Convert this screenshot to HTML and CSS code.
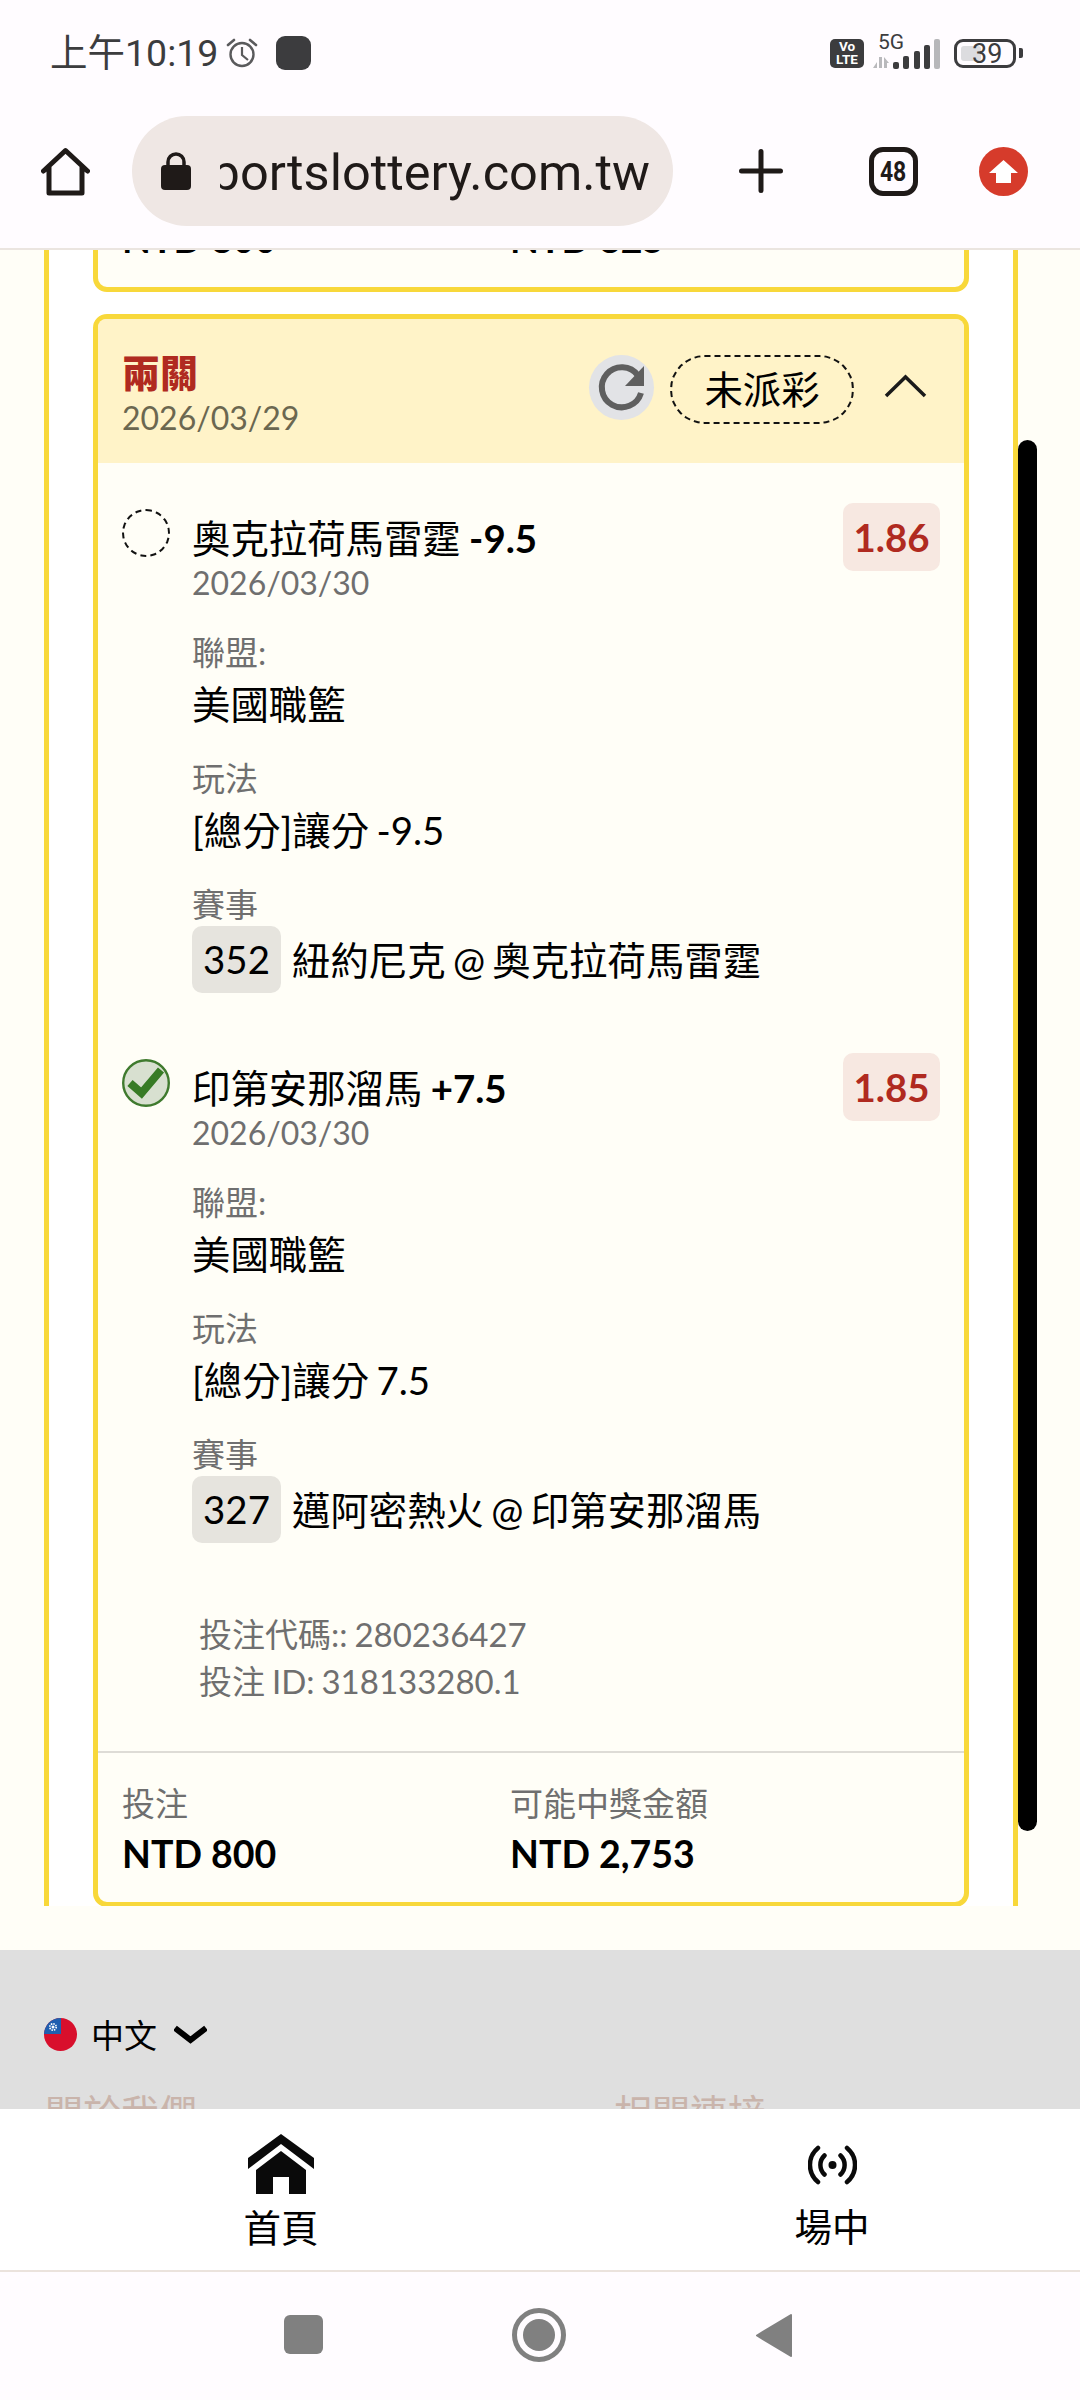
FILE: index.html
```html
<!DOCTYPE html>
<html lang="zh-Hant">
<head>
<meta charset="utf-8">
<title>sportslottery.com.tw</title>
<link rel="stylesheet" href="styles.css">
</head>
<body>
<div class="screen">
  <header class="chrome">
    <div class="status">
      <div class="status-left">
        <span class="time">上午10:19</span>
        <svg class="ic-alarm" viewBox="0 0 32 30"><circle cx="16" cy="16.500" r="11.500" fill="none" stroke="#5a5a5c" stroke-width="2.400"/><path d="M16 9v8l6 5" fill="none" stroke="#5a5a5c" stroke-width="2.200"/><path d="M2 7l6-5M30 7l-6-5" fill="none" stroke="#5a5a5c" stroke-width="2.600" stroke-linecap="round"/></svg>
        <span class="notif"></span>
      </div>
      <div class="status-right">
        <span class="volte"><span>Vo</span><span>LTE</span></span>
        <span class="net">
          <span class="fiveg">5G</span>
          <svg class="ic-signal" viewBox="0 0 67 32"><path d="M0 31l4-6v6zM6 20h3v11H6zM11 20l5 6h-2v5h-3z" fill="#b9b9bc"/><rect x="20" y="25" width="6" height="7" rx="2" fill="#3c3c3e"/><rect x="30" y="19" width="6" height="13" rx="2" fill="#3c3c3e"/><rect x="41" y="14" width="6" height="18" rx="2" fill="#3c3c3e"/><rect x="51" y="8" width="6" height="24" rx="2" fill="#3c3c3e"/><rect x="61" y="2" width="6" height="30" rx="2" fill="#b7b7ba"/></svg>
        </span>
        <span class="battery"><span class="battery-fill"></span><span class="battery-num">39</span></span>
        <span class="battery-nub"></span>
      </div>
    </div>
    <div class="toolbar">
      <svg class="ic-home" viewBox="0 0 49 49"><path d="M2.500 24L24.500 3.500 46.500 24M8 20v26h33V20" fill="none" stroke="#1f1a18" stroke-width="5" stroke-linejoin="round" stroke-linecap="round"/></svg>
      <div class="omnibox">
        <svg class="ic-lock" viewBox="0 0 30 38"><path d="M7 15V10a8 8 0 0 1 16 0v5" fill="none" stroke="#1f1a18" stroke-width="3.500"/><rect x="0" y="13" width="30" height="25" rx="4" fill="#1f1a18"/></svg>
        <div class="url"><span>sportslottery.com.tw</span></div>
      </div>
      <svg class="ic-plus" viewBox="0 0 44 44"><path d="M2.500 22h39M22 2.500v39" fill="none" stroke="#1f1a18" stroke-width="5" stroke-linecap="round"/></svg>
      <div class="tabs"><span>48</span></div>
      <svg class="ic-update" viewBox="0 0 49 49"><circle cx="24.500" cy="24.500" r="24.500" fill="#d63b2b"/><path d="M24.500 13L39 26h-7v10H17V26h-7z" fill="#fff"/></svg>
    </div>
  </header>

  <main class="content">
    <div class="panel">
      <section class="card card-prev">
        <div class="totals">
          <div class="total"><div class="total-label">投注</div><div class="total-value">NTD 800</div></div>
          <div class="total"><div class="total-label">可能中獎金額</div><div class="total-value">NTD 825</div></div>
        </div>
      </section>

      <section class="card">
        <div class="card-head">
          <div class="head-title">
            <div class="parlay">兩關</div>
            <div class="parlay-date">2026/03/29</div>
          </div>
          <div class="head-actions">
            <span class="refresh"><svg viewBox="0 0 65 65"><path d="M49 20.500A20 20 0 1 0 52 38" fill="none" stroke="#5f5f5f" stroke-width="6"/><path d="M55 11v20H36z" fill="#5f5f5f"/></svg></span>
            <span class="pill">未派彩</span>
            <svg class="ic-up" viewBox="0 0 43 24"><path d="M2 22L21.500 3 41 22" fill="none" stroke="#1a1a1a" stroke-width="3.500"/></svg>
          </div>
        </div>

        <div class="leg">
          <div class="leg-head">
            <span class="mark mark-pending"></span>
            <div class="leg-title">
              <div class="pick">奧克拉荷馬雷霆 <b>-9.5</b></div>
              <div class="leg-date">2026/03/30</div>
            </div>
            <span class="odds">1.86</span>
          </div>
          <div class="leg-details">
            <div class="field"><div class="field-label">聯盟:</div><div class="field-value">美國職籃</div></div>
            <div class="field"><div class="field-label">玩法</div><div class="field-value">[總分]讓分 -9.5</div></div>
            <div class="field"><div class="field-label">賽事</div>
              <div class="match"><span class="match-no">352</span><span>紐約尼克 @ 奧克拉荷馬雷霆</span></div>
            </div>
          </div>
        </div>

        <div class="leg">
          <div class="leg-head">
            <svg class="mark" viewBox="0 0 48 48"><circle cx="24" cy="24" r="22.800" fill="#d8e0d0" stroke="#3f7a2e" stroke-width="2.400"/><path d="M8 24l11.500 10L39 11" fill="none" stroke="#377b25" stroke-width="8"/></svg>
            <div class="leg-title">
              <div class="pick">印第安那溜馬 <b>+7.5</b></div>
              <div class="leg-date">2026/03/30</div>
            </div>
            <span class="odds">1.85</span>
          </div>
          <div class="leg-details">
            <div class="field"><div class="field-label">聯盟:</div><div class="field-value">美國職籃</div></div>
            <div class="field"><div class="field-label">玩法</div><div class="field-value">[總分]讓分 7.5</div></div>
            <div class="field"><div class="field-label">賽事</div>
              <div class="match"><span class="match-no">327</span><span>邁阿密熱火 @ 印第安那溜馬</span></div>
            </div>
          </div>
        </div>

        <div class="bet-ids">
          <div>投注代碼:: 280236427</div>
          <div>投注 ID: 318133280.1</div>
        </div>

        <div class="totals">
          <div class="total"><div class="total-label">投注</div><div class="total-value">NTD 800</div></div>
          <div class="total"><div class="total-label">可能中獎金額</div><div class="total-value">NTD 2,753</div></div>
        </div>
      </section>
    </div>
    <div class="scrollbar"></div>
  </main>

  <footer class="site-footer">
    <div class="lang">
      <svg class="ic-flag" viewBox="0 0 33 33"><defs><clipPath id="flagclip"><circle cx="16.500" cy="16.500" r="16.500"/></clipPath></defs><g clip-path="url(#flagclip)"><rect width="33" height="33" fill="#d80f2c"/><rect width="17" height="16" fill="#1f5fb0"/><circle cx="9" cy="9" r="3.200" fill="none" stroke="#fff" stroke-width="1.600" stroke-dasharray="1.500 1"/><circle cx="9" cy="9" r="1.500" fill="#fff"/></g></svg>
      <span class="lang-name">中文</span>
      <svg class="ic-down" viewBox="0 0 33 19"><path d="M1 3l15.500 12L32 3" fill="none" stroke="#000" stroke-width="6"/></svg>
    </div>
    <div class="footer-links">
      <span>關於我們</span>
      <span>相關連接</span>
    </div>
  </footer>

  <nav class="tabbar">
    <a class="tab tab-home">
      <svg class="ic-solid-home" viewBox="0 0 66 60"><path d="M33 0L66 24V35L33 10 0 35V24zM33 17L58 36V60H41V43H25V60H8V36z" fill="#0a0a0a"/></svg>
      <span>首頁</span>
    </a>
    <a class="tab tab-live">
      <svg class="ic-live" viewBox="0 0 49 40"><circle cx="24.500" cy="20" r="4" fill="#0a0a0a"/><path d="M10 3A22 22 0 0 0 10 37M39 3A22 22 0 0 1 39 37M16.500 10.500A13 13 0 0 0 16.500 29.500M32.500 10.500A13 13 0 0 1 32.500 29.500" fill="none" stroke="#0a0a0a" stroke-width="4.500" stroke-linecap="round"/></svg>
      <span>場中</span>
    </a>
  </nav>

  <div class="sysnav">
    <span class="sys-square"></span>
    <span class="sys-circle"><span></span></span>
    <svg class="sys-back" viewBox="0 0 37 45"><path d="M36 2L2 22.500 36 43z" fill="#808080" stroke="#808080" stroke-width="2" stroke-linejoin="round"/></svg>
  </div>
</div>
</body>
</html>
```
FILE: styles.css
```css
* { box-sizing: border-box; }
html, body { margin: 0; padding: 0; }
body {
  width: 1080px;
  height: 2400px;
  overflow: hidden;
  font-family: "Lato", "Noto Sans CJK TC", sans-serif;
  color: #000;
  background: #fffcff;
}
svg { display: block; flex: none; }
.screen { width: 1080px; height: 2400px; display: flex; flex-direction: column; overflow: hidden; }

/* browser chrome */
.chrome { height: 250px; background: #fffcff; border-bottom: 2px solid #ebe5e0; flex: none; position: relative; z-index: 2; }
.status { height: 106px; display: flex; justify-content: space-between; align-items: center; padding: 0 57px 0 50px; }
.status-left, .status-right { display: flex; align-items: center; }
.time { font-family: "Roboto", "Noto Sans CJK TC", sans-serif; font-size: 37.500px; color: #3c3c3e; line-height: 50px; }
.ic-alarm { width: 32px; height: 30px; margin-left: 8px; }
.notif { width: 35px; height: 34px; border-radius: 9px; background: #3c3c3e; margin-left: 18px; }
.volte { width: 34px; height: 29px; border-radius: 5px; background: #3c3c3e; color: #fff; display: flex; flex-direction: column; align-items: center; justify-content: center; font-family: "Roboto", sans-serif; font-weight: 700; font-size: 13.500px; line-height: 13px; }
.net { width: 67px; height: 32px; margin-left: 9px; position: relative; }
.fiveg { position: absolute; left: 5px; top: -6px; font-family: "Roboto", sans-serif; font-size: 21px; line-height: 22px; color: #3c3c3e; }
.ic-signal { width: 67px; height: 32px; }
.battery { width: 62px; height: 29px; margin-left: 14px; border: 3px solid #3c3c3e; border-radius: 9px; position: relative; display: block; }
.battery-fill { position: absolute; left: 4px; top: 4px; bottom: 4px; width: 20px; background: #dcdcdf; border-radius: 3px; }
.battery-num { position: absolute; left: 15px; top: 1px; font-family: "Roboto", sans-serif; font-size: 27px; line-height: 23px; color: #3c3c3e; }
.battery-nub { width: 4px; height: 10px; margin-left: 3px; background: #3c3c3e; border-radius: 0 2px 2px 0; }

.toolbar { height: 142px; padding: 0 0 12px 41px; display: flex; align-items: center; }
.ic-home { width: 49px; height: 49px; }
.omnibox { width: 541px; height: 110px; margin-left: 42px; border-radius: 55px; background: #efe7e4; display: flex; align-items: center; padding-left: 29px; }
.ic-lock { width: 30px; height: 38px; }
.url { width: 430px; margin-left: 29px; padding-top: 3px; overflow: hidden; display: flex; justify-content: flex-end; font-family: "Roboto", sans-serif; font-size: 50.500px; line-height: 64px; color: #1f1a18; white-space: nowrap; }
.url span { flex: none; }
.ic-plus { width: 44px; height: 44px; margin-left: 66px; }
.tabs { width: 49px; height: 49px; margin-left: 86px; border: 5px solid #1f1a18; border-radius: 14px; display: flex; align-items: center; justify-content: center; font-family: "Roboto", sans-serif; font-weight: 700; font-size: 28px; color: #1f1a18; }
.tabs span { display: block; transform: scaleX(0.82); }
.ic-update { width: 49px; height: 49px; margin-left: 61px; }

/* content */
.content { height: 1700px; flex: none; background: #fffef7; padding-left: 44px; position: relative; overflow: hidden; }
.panel { width: 974px; height: 1656px; background: #fff; border-left: 5px solid #f8d83a; border-right: 5px solid #f8d83a; padding: 0 44px; overflow: hidden; }
.card { width: 876px; border: 5px solid #f8d83a; border-radius: 14px; background: #fffef7; margin-top: 22px; }
.card-prev { margin-top: -119px; }
.scrollbar { position: absolute; left: 1018px; top: 190px; width: 19px; height: 1391px; border-radius: 10px; background: #000; }

.card-head { height: 144px; background: #fff3c8; border-radius: 8px 8px 0 0; display: flex; justify-content: space-between; padding: 30px 37px 0 24px; }
.parlay { font-size: 38px; font-weight: 900; line-height: 46px; color: #b02a20; }
.parlay-date { font-size: 32px; line-height: 46px; color: #6b6750; }
.head-actions { display: flex; align-items: flex-start; margin-top: 6px; }
.refresh { width: 65px; height: 65px; border-radius: 50%; background: #e2e3e6; display: block; }
.refresh svg { width: 65px; height: 65px; }
.pill { width: 184px; height: 69px; margin-left: 16px; border: 2px dashed #111; border-radius: 35px; font-size: 38.400px; line-height: 65px; text-align: center; }
.ic-up { width: 43px; height: 24px; margin: 19px 0 0 30px; }

.leg { padding: 40px 24px 0 24px; }
.leg + .leg { padding-top: 60px; }
.leg-head { display: flex; align-items: flex-start; }
.mark { width: 48px; height: 48px; margin-top: 6px; flex: none; }
.mark-pending { border: 2px dashed #111; border-radius: 50%; display: block; }
.leg-title { margin: 12px 0 0 22px; flex: 1; }
.pick { font-size: 38.400px; line-height: 46px; word-spacing: -1.500px; }
.pick b { font-weight: 700; }
.leg-date { font-size: 32px; line-height: 44px; color: #6f6f6f; }
.odds { width: 97px; height: 68px; border-radius: 10px; background: #f7e8e1; color: #b02a20; font-size: 38.400px; font-weight: 700; line-height: 68px; text-align: center; }
.leg-details { margin: 1px 0 0 70px; }
.field { margin-top: 22px; }
.field-label { font-size: 33px; line-height: 50px; color: #6f6f6f; }
.field-value { font-size: 38.400px; line-height: 54px; word-spacing: -2.500px; }
.match { display: flex; align-items: center; font-size: 38.400px; line-height: 54px; margin-top: -3px; word-spacing: -2.500px; }
.match-no { width: 89px; height: 67px; line-height: 67px; border-radius: 10px; background: #e6e4de; text-align: center; margin-right: 11px; }

.bet-ids { margin: 68px 0 46px 101px; font-size: 33px; line-height: 47px; color: #6f6f6f; word-spacing: -1.500px; }

.totals { border-top: 2px solid #dedcd6; padding: 25px 0 23px 24px; display: flex; }
.total { width: 388px; }
.total-label { font-size: 33px; line-height: 50px; color: #6f6f6f; }
.total-value { font-size: 37.500px; line-height: 51px; font-weight: 700; }

/* site footer */
.site-footer { height: 159px; flex: none; background: #dfdfdf; padding: 68px 0 0 44px; overflow: hidden; }
.lang { display: flex; align-items: center; height: 33px; }
.ic-flag { width: 33px; height: 33px; }
.lang-name { font-size: 33px; line-height: 40px; margin-left: 14px; }
.ic-down { width: 33px; height: 19px; margin-left: 17px; }
.footer-links { display: flex; margin-top: 36px; font-size: 38px; line-height: 50px; color: #c9b4ab; }
.footer-links span { flex: none; width: 569px; padding-left: 1px; }

/* bottom tabs */
.tabbar { height: 163px; flex: none; background: #fff; border-bottom: 2px solid #ebe3dd; display: flex; align-items: flex-start; position: relative; z-index: 1; }
.tab { display: flex; flex-direction: column; align-items: center; width: 100px; font-size: 37.500px; line-height: 50px; color: #000; }
.tab-home { margin: 25px 0 0 231px; }
.tab-live { margin: 36px 0 0 451px; }
.ic-solid-home { width: 66px; height: 60px; margin-bottom: 9px; }
.ic-live { width: 49px; height: 40px; margin-bottom: 17px; }

/* android nav */
.sysnav { flex: 1; background: #fffcff; position: relative; }
.sys-square { position: absolute; left: 284px; top: 43px; width: 39px; height: 39px; border-radius: 6px; background: #808080; }
.sys-circle { position: absolute; left: 512px; top: 36px; width: 54px; height: 54px; border: 5px solid #808080; border-radius: 50%; display: flex; align-items: center; justify-content: center; }
.sys-circle span { width: 32px; height: 32px; border-radius: 50%; background: #808080; }
.sys-back { position: absolute; left: 755px; top: 41px; width: 37px; height: 45px; }
```
